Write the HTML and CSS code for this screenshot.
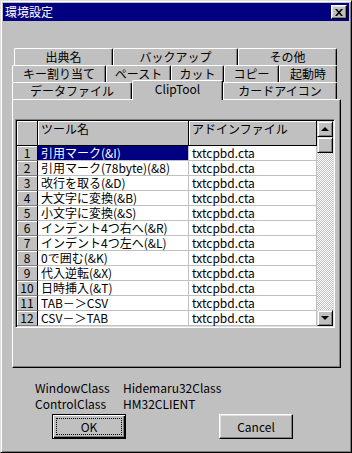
FILE: index.html
```html
<!DOCTYPE html>
<html lang="ja">
<head>
  <meta charset="UTF-8">
  <title>環境設定</title>
  <link rel="stylesheet" href="styles.css">
</head>
<body>

  <div class="window">
    <div class="titlebar">
      <span class="title">環境設定</span>
      <span class="close-btn">
        <svg width="8" height="7" viewBox="0 0 8 7"><path d="M0 0h2l2 2.2L6 0h2L5 3.5 8 7H6L4 4.8 2 7H0l3-3.5z" fill="#000"/></svg>
      </span>
    </div>

    <div class="tabs">
      <div class="tab-row row-1">
        <div class="tab">出典名</div>
        <div class="tab">バックアップ</div>
        <div class="tab">その他</div>
      </div>
      <div class="tab-row row-2">
        <div class="tab">キー割り当て</div>
        <div class="tab">ペースト</div>
        <div class="tab">カット</div>
        <div class="tab">コピー</div>
        <div class="tab">起動時</div>
      </div>
      <div class="tab-row row-3">
        <div class="tab">データファイル</div>
        <div class="tab tab-active">ClipTool</div>
        <div class="tab">カードアイコン</div>
      </div>

      <div class="panel">
        <div class="grid-box">
          <div class="sheet">
            <div class="fixed head corner"></div>
            <div class="fixed head">ツール名</div>
            <div class="fixed head">アドインファイル</div>

            <div class="fixed num">1</div><div class="cell selected">引用マーク(&amp;I)</div><div class="cell">txtcpbd.cta</div>
            <div class="fixed num">2</div><div class="cell">引用マーク(78byte)(&amp;8)</div><div class="cell">txtcpbd.cta</div>
            <div class="fixed num">3</div><div class="cell">改行を取る(&amp;D)</div><div class="cell">txtcpbd.cta</div>
            <div class="fixed num">4</div><div class="cell">大文字に変換(&amp;B)</div><div class="cell">txtcpbd.cta</div>
            <div class="fixed num">5</div><div class="cell">小文字に変換(&amp;S)</div><div class="cell">txtcpbd.cta</div>
            <div class="fixed num">6</div><div class="cell">インデント4つ右へ(&amp;R)</div><div class="cell">txtcpbd.cta</div>
            <div class="fixed num">7</div><div class="cell">インデント4つ左へ(&amp;L)</div><div class="cell">txtcpbd.cta</div>
            <div class="fixed num">8</div><div class="cell">0で囲む(&amp;K)</div><div class="cell">txtcpbd.cta</div>
            <div class="fixed num">9</div><div class="cell">代入逆転(&amp;X)</div><div class="cell">txtcpbd.cta</div>
            <div class="fixed num">10</div><div class="cell">日時挿入(&amp;T)</div><div class="cell">txtcpbd.cta</div>
            <div class="fixed num">11</div><div class="cell">TAB－＞CSV</div><div class="cell">txtcpbd.cta</div>
            <div class="fixed num">12</div><div class="cell">CSV－＞TAB</div><div class="cell">txtcpbd.cta</div>
          </div>

          <div class="scrollbar">
            <div class="sb-btn"><span class="arrow-up"></span></div>
            <div class="sb-btn"></div>
            <div class="sb-track"></div>
            <div class="sb-btn"><span class="arrow-down"></span></div>
          </div>
        </div>
      </div>
    </div>

    <div class="info">
      <span>WindowClass</span><span>Hidemaru32Class</span>
      <span>ControlClass</span><span>HM32CLIENT</span>
    </div>

    <div class="buttons">
      <button class="btn btn-default"><span class="focus">OK</span></button>
      <button class="btn">Cancel</button>
    </div>
  </div>

</body>
</html>
```

FILE: styles.css
```css
body, html {
  margin: 0;
  padding: 0;
  font-family: "Noto Sans CJK JP", sans-serif;
  font-size: 12px;
  color: #000;
  background-color: #c0c0c0;
}

.window {
  width: 352px;
  height: 453px;
  box-sizing: border-box;
  padding: 2px;
  background-color: #c0c0c0;
  border: 1px solid;
  border-color: #dfdfdf #000 #000 #dfdfdf;
  box-shadow: inset 1px 1px #fff, inset -1px -1px #808080;
}

.titlebar {
  height: 18px;
  background-color: #000080;
  display: flex;
  align-items: center;
  justify-content: space-between;
  padding: 0 2px 0 2px;
}

.title {
  color: #fff;
  font-size: 12px;
  line-height: 18px;
}

.close-btn {
  width: 16px;
  height: 14px;
  box-sizing: border-box;
  display: flex;
  align-items: center;
  justify-content: center;
  background-color: #c0c0c0;
  border: 1px solid;
  border-color: #fff #000 #000 #fff;
  box-shadow: inset -1px -1px #808080, inset 1px 1px #dfdfdf;
}

/* onglets */
.tabs {
  margin: 27px 0 0 9px;
  width: 329px;
}

.tab-row {
  display: grid;
  height: 17px;
}

.row-1 {
  margin-left: 2px;
  grid-template-columns: 99px 125px 99px;
}

.row-2 {
  grid-template-columns: 94px 65px 53px 55px 58px;
}

.row-3 {
  grid-template-columns: 120px 91px 114px;
}

.tab {
  height: 17px;
  box-sizing: border-box;
  background-color: #c0c0c0;
  border-top: 1px solid #fff;
  border-left: 1px solid #fff;
  border-right: 1px solid #000;
  border-radius: 2px 2px 0 0;
  box-shadow: inset -1px 0 #808080;
  text-align: center;
  line-height: 15px;
  white-space: nowrap;
}

.tab-active {
  position: relative;
  z-index: 1;
  height: 20px;
  margin-top: -2px;
  margin-bottom: -1px;
  line-height: 16px;
}

.panel {
  height: 269px;
  box-sizing: border-box;
  border: 1px solid;
  border-color: #fff #000 #000 #fff;
  box-shadow: inset -1px -1px #808080;
  padding: 19px 0 0 2px;
}

/* grille */
.grid-box {
  width: 320px;
  height: 209px;
  box-sizing: border-box;
  padding: 1px;
  border: 1px solid;
  border-color: #808080 #fff #fff #808080;
  box-shadow: inset 1px 1px #000, inset -1px -1px #dfdfdf;
  display: flex;
}

.sheet {
  width: 300px;
  display: grid;
  grid-template-columns: 21px 151px 128px;
  grid-template-rows: 25px repeat(12, 15px);
  background-color: #fff;
}

.fixed {
  background-color: #c0c0c0;
  border-right: 1px solid #000;
  border-bottom: 1px solid #808080;
  box-shadow: inset 1px 1px #fff;
  line-height: 14px;
}

.head {
  border-bottom-color: #000;
  padding: 1px 0 0 3px;
  white-space: nowrap;
}

.corner {
  padding: 0;
}

.num {
  text-align: center;
}

.cell {
  border-right: 1px solid #c0c0c0;
  border-bottom: 1px solid #c0c0c0;
  padding-left: 3px;
  line-height: 14px;
  white-space: nowrap;
}

.cell.selected {
  background-color: #000080;
  color: #fff;
}

.scrollbar {
  width: 16px;
  display: flex;
  flex-direction: column;
}

.sb-btn {
  height: 16px;
  box-sizing: border-box;
  background-color: #c0c0c0;
  border: 1px solid;
  border-color: #dfdfdf #000 #000 #dfdfdf;
  box-shadow: inset 1px 1px #fff, inset -1px -1px #808080;
  display: flex;
  align-items: center;
  justify-content: center;
}

.sb-track {
  flex: 1;
  background: repeating-conic-gradient(#c0c0c0 0 25%, #fff 0 50%) 0 0 / 2px 2px;
}

.arrow-up, .arrow-down {
  width: 0;
  height: 0;
  border-left: 4px solid transparent;
  border-right: 4px solid transparent;
}

.arrow-up {
  border-bottom: 4px solid #000;
}

.arrow-down {
  border-top: 4px solid #000;
}

/* bas de la fenêtre */
.info {
  margin: 12px 0 0 32px;
  display: grid;
  grid-template-columns: 88px auto;
  line-height: 16px;
}

.buttons {
  margin-top: 2px;
  padding-left: 49px;
  display: flex;
  gap: 93px;
}

.btn {
  width: 74px;
  height: 25px;
  box-sizing: border-box;
  padding: 0;
  font-family: "Noto Sans CJK JP", sans-serif;
  font-size: 12px;
  color: #000;
  background-color: #c0c0c0;
  border: 1px solid;
  border-color: #fff #000 #000 #fff;
  box-shadow: inset -1px -1px #808080, inset 1px 1px #dfdfdf;
}

.btn-default {
  border-color: #000;
  padding: 3px;
  box-shadow: inset 1px 1px #fff, inset -1px -1px #000, inset -2px -2px #808080;
}

.focus {
  display: flex;
  align-items: center;
  justify-content: center;
  height: 100%;
  box-sizing: border-box;
  border: 1px dotted #000;
}
```
